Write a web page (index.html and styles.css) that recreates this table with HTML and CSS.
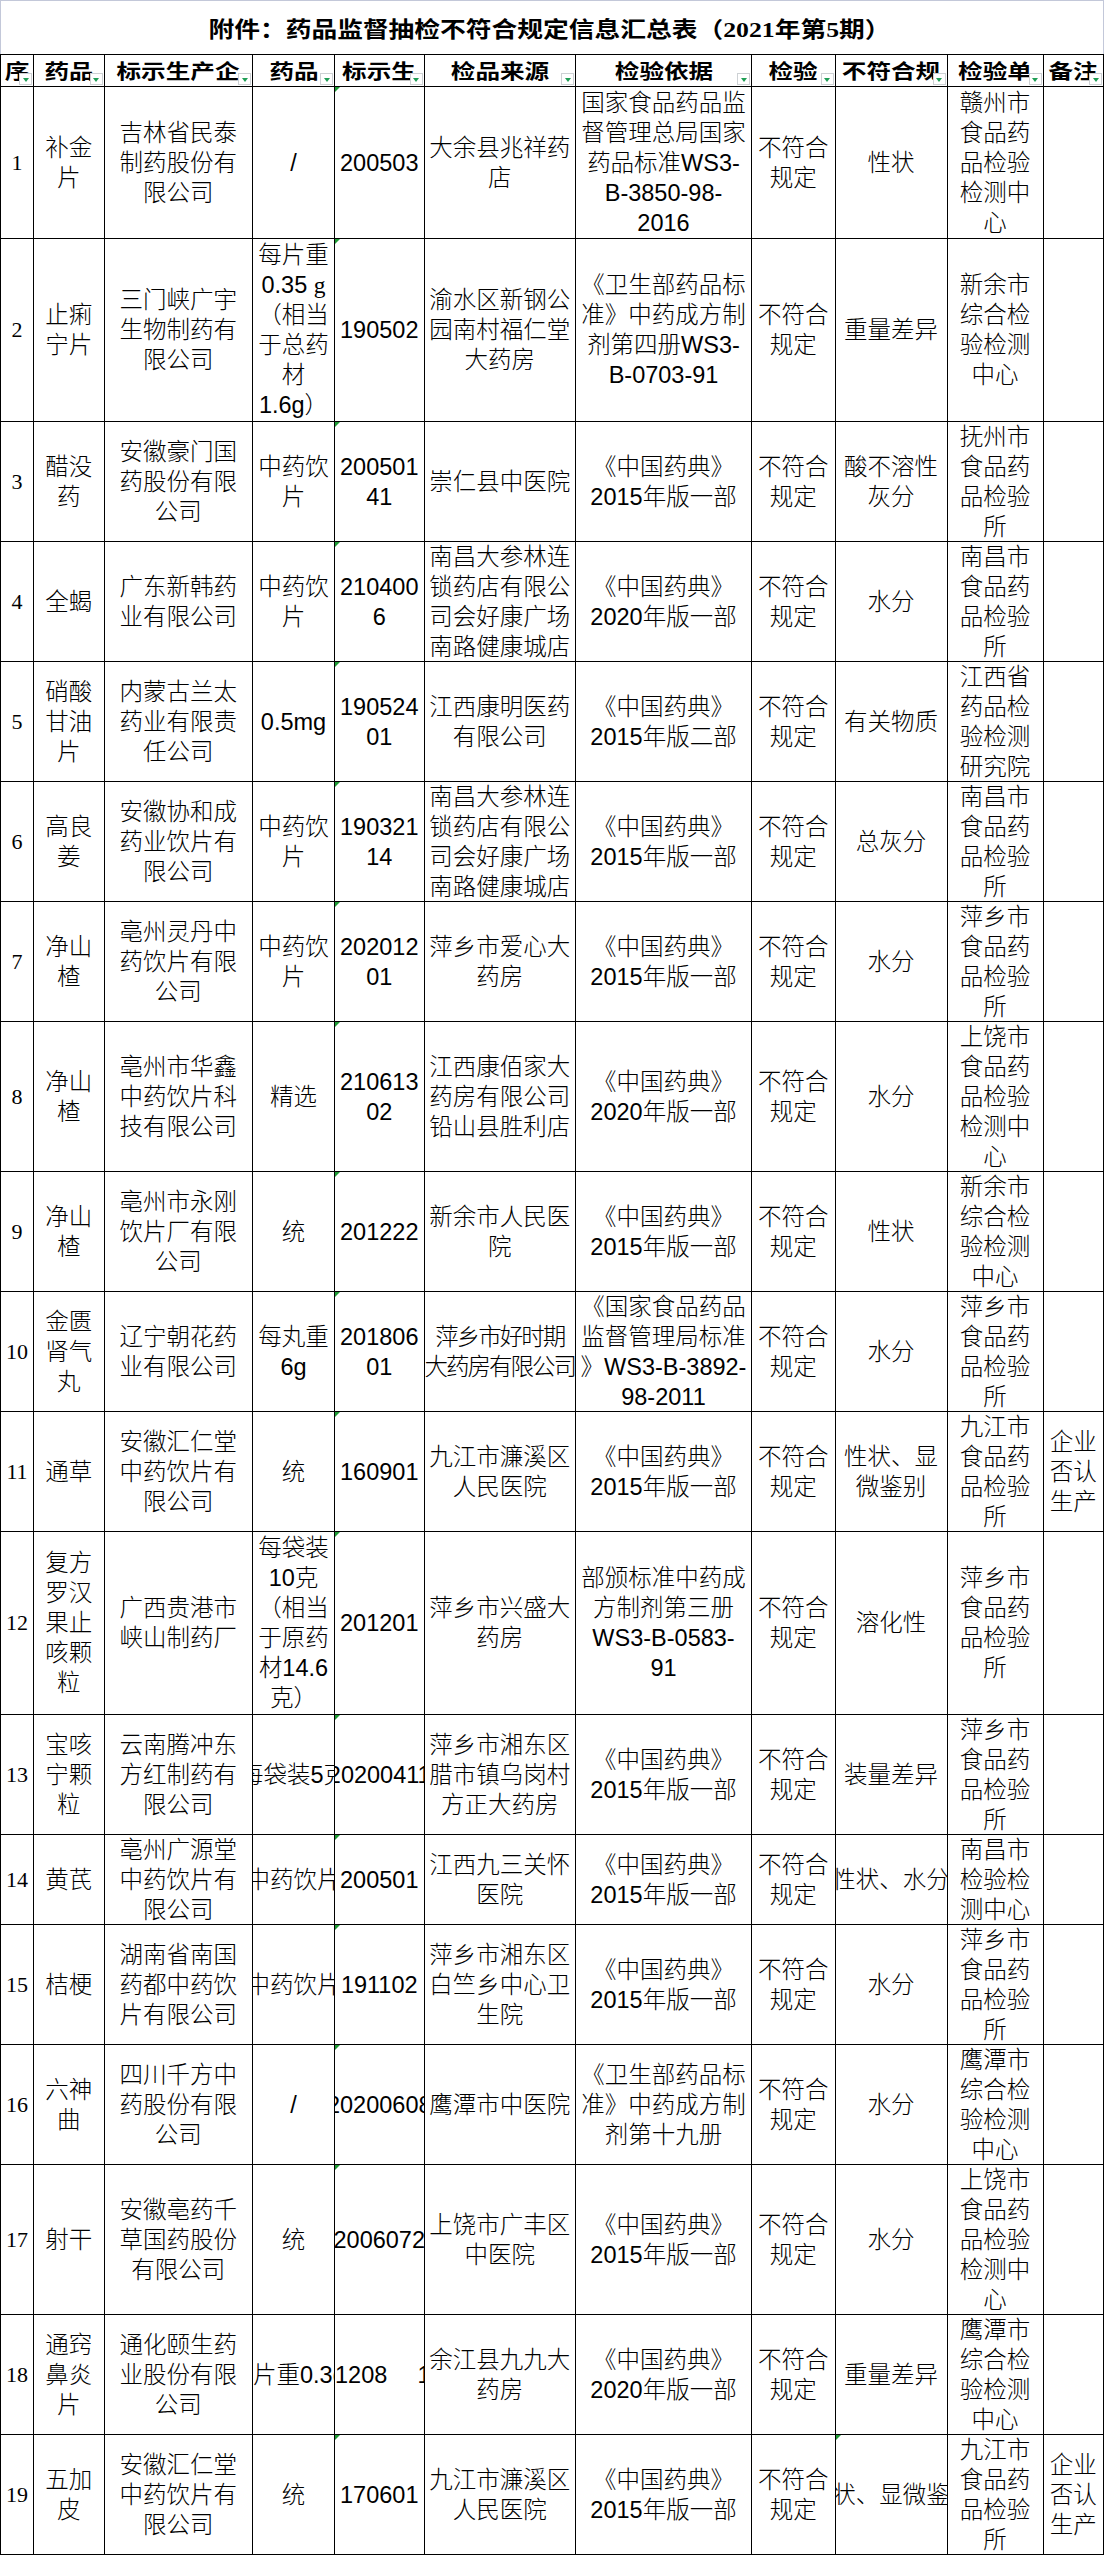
FILE: index.html
```html
<!DOCTYPE html>
<html lang="zh-CN">
<head>
<meta charset="utf-8">
<title>药品监督抽检不符合规定信息汇总表</title>
<link rel="stylesheet" href="styles.css">
</head>
<body>
<div class="sheet">
  <div class="title"><span class="title-text">附件：药品监督抽检不符合规定信息汇总表（2021年第5期）</span></div>
  <div class="grid">
    <div class="row head">
      <div class="c hc"><span class="ht">序</span><i class="fb"></i></div>
      <div class="c hc"><span class="ht">药品</span><i class="fb"></i></div>
      <div class="c hc"><span class="ht">标示生产企</span><i class="fb"></i></div>
      <div class="c hc"><span class="ht">药品</span><i class="fb"></i></div>
      <div class="c hc"><span class="ht">标示生</span><i class="fb"></i></div>
      <div class="c hc"><span class="ht">检品来源</span><i class="fb"></i></div>
      <div class="c hc"><span class="ht">检验依据</span><i class="fb"></i></div>
      <div class="c hc"><span class="ht">检验</span><i class="fb"></i></div>
      <div class="c hc"><span class="ht">不符合规</span><i class="fb"></i></div>
      <div class="c hc"><span class="ht">检验单</span><i class="fb"></i></div>
      <div class="c hc"><span class="ht">备注</span><i class="fb"></i></div>
    </div>

    <div class="row r1">
      <div class="c idx">1</div>
      <div class="c"><span class="t">补金<br>片</span></div>
      <div class="c"><span class="t">吉林省民泰<br>制药股份有<br>限公司</span></div>
      <div class="c"><span class="t">/</span></div>
      <div class="c flag"><span class="t">200503</span></div>
      <div class="c"><span class="t">大余县兆祥药<br>店</span></div>
      <div class="c"><span class="t">国家食品药品监<br>督管理总局国家<br>药品标准WS3-<br>B-3850-98-<br>2016</span></div>
      <div class="c"><span class="t">不符合<br>规定</span></div>
      <div class="c"><span class="t">性状</span></div>
      <div class="c"><span class="t">赣州市<br>食品药<br>品检验<br>检测中<br>心</span></div>
      <div class="c"></div>
    </div>

    <div class="row l6">
      <div class="c idx">2</div>
      <div class="c"><span class="t">止痢<br>宁片</span></div>
      <div class="c"><span class="t">三门峡广宇<br>生物制药有<br>限公司</span></div>
      <div class="c"><span class="t">每片重<br>0.35 <span class="sg">g</span><br>（相当<br>于总药<br>材<br>1.6g）</span></div>
      <div class="c flag"><span class="t">190502</span></div>
      <div class="c"><span class="t">渝水区新钢公<br>园南村福仁堂<br>大药房</span></div>
      <div class="c"><span class="t">《卫生部药品标<br>准》中药成方制<br>剂第四册WS3-<br>B-0703-91</span></div>
      <div class="c"><span class="t">不符合<br>规定</span></div>
      <div class="c"><span class="t">重量差异</span></div>
      <div class="c"><span class="t">新余市<br>综合检<br>验检测<br>中心</span></div>
      <div class="c"></div>
    </div>

    <div class="row l4">
      <div class="c idx">3</div>
      <div class="c"><span class="t">醋没<br>药</span></div>
      <div class="c"><span class="t">安徽豪门国<br>药股份有限<br>公司</span></div>
      <div class="c"><span class="t">中药饮<br>片</span></div>
      <div class="c flag"><span class="t">200501<br>41</span></div>
      <div class="c"><span class="t">崇仁县中医院</span></div>
      <div class="c"><span class="t">《中国药典》<br>2015年版一部</span></div>
      <div class="c"><span class="t">不符合<br>规定</span></div>
      <div class="c"><span class="t">酸不溶性<br>灰分</span></div>
      <div class="c"><span class="t">抚州市<br>食品药<br>品检验<br>所</span></div>
      <div class="c"></div>
    </div>

    <div class="row l4">
      <div class="c idx">4</div>
      <div class="c"><span class="t">全蝎</span></div>
      <div class="c"><span class="t">广东新韩药<br>业有限公司</span></div>
      <div class="c"><span class="t">中药饮<br>片</span></div>
      <div class="c flag"><span class="t">210400<br>6</span></div>
      <div class="c"><span class="t">南昌大参林连<br>锁药店有限公<br>司会好康广场<br>南路健康城店</span></div>
      <div class="c"><span class="t">《中国药典》<br>2020年版一部</span></div>
      <div class="c"><span class="t">不符合<br>规定</span></div>
      <div class="c"><span class="t">水分</span></div>
      <div class="c"><span class="t">南昌市<br>食品药<br>品检验<br>所</span></div>
      <div class="c"></div>
    </div>

    <div class="row l4">
      <div class="c idx">5</div>
      <div class="c"><span class="t">硝酸<br>甘油<br>片</span></div>
      <div class="c"><span class="t">内蒙古兰太<br>药业有限责<br>任公司</span></div>
      <div class="c"><span class="t">0.5mg</span></div>
      <div class="c flag"><span class="t">190524<br>01</span></div>
      <div class="c"><span class="t">江西康明医药<br>有限公司</span></div>
      <div class="c"><span class="t">《中国药典》<br>2015年版二部</span></div>
      <div class="c"><span class="t">不符合<br>规定</span></div>
      <div class="c"><span class="t">有关物质</span></div>
      <div class="c"><span class="t">江西省<br>药品检<br>验检测<br>研究院</span></div>
      <div class="c"></div>
    </div>

    <div class="row l4">
      <div class="c idx">6</div>
      <div class="c"><span class="t">高良<br>姜</span></div>
      <div class="c"><span class="t">安徽协和成<br>药业饮片有<br>限公司</span></div>
      <div class="c"><span class="t">中药饮<br>片</span></div>
      <div class="c flag"><span class="t">190321<br>14</span></div>
      <div class="c"><span class="t">南昌大参林连<br>锁药店有限公<br>司会好康广场<br>南路健康城店</span></div>
      <div class="c"><span class="t">《中国药典》<br>2015年版一部</span></div>
      <div class="c"><span class="t">不符合<br>规定</span></div>
      <div class="c"><span class="t">总灰分</span></div>
      <div class="c"><span class="t">南昌市<br>食品药<br>品检验<br>所</span></div>
      <div class="c"></div>
    </div>

    <div class="row l4">
      <div class="c idx">7</div>
      <div class="c"><span class="t">净山<br>楂</span></div>
      <div class="c"><span class="t">亳州灵丹中<br>药饮片有限<br>公司</span></div>
      <div class="c"><span class="t">中药饮<br>片</span></div>
      <div class="c flag"><span class="t">202012<br>01</span></div>
      <div class="c"><span class="t">萍乡市爱心大<br>药房</span></div>
      <div class="c"><span class="t">《中国药典》<br>2015年版一部</span></div>
      <div class="c"><span class="t">不符合<br>规定</span></div>
      <div class="c"><span class="t">水分</span></div>
      <div class="c"><span class="t">萍乡市<br>食品药<br>品检验<br>所</span></div>
      <div class="c"></div>
    </div>

    <div class="row l5">
      <div class="c idx">8</div>
      <div class="c"><span class="t">净山<br>楂</span></div>
      <div class="c"><span class="t">亳州市华鑫<br>中药饮片科<br>技有限公司</span></div>
      <div class="c"><span class="t">精选</span></div>
      <div class="c flag"><span class="t">210613<br>02</span></div>
      <div class="c"><span class="t">江西康佰家大<br>药房有限公司<br>铅山县胜利店</span></div>
      <div class="c"><span class="t">《中国药典》<br>2020年版一部</span></div>
      <div class="c"><span class="t">不符合<br>规定</span></div>
      <div class="c"><span class="t">水分</span></div>
      <div class="c"><span class="t">上饶市<br>食品药<br>品检验<br>检测中<br>心</span></div>
      <div class="c"></div>
    </div>

    <div class="row l4">
      <div class="c idx">9</div>
      <div class="c"><span class="t">净山<br>楂</span></div>
      <div class="c"><span class="t">亳州市永刚<br>饮片厂有限<br>公司</span></div>
      <div class="c"><span class="t">统</span></div>
      <div class="c flag"><span class="t">201222</span></div>
      <div class="c"><span class="t">新余市人民医<br>院</span></div>
      <div class="c"><span class="t">《中国药典》<br>2015年版一部</span></div>
      <div class="c"><span class="t">不符合<br>规定</span></div>
      <div class="c"><span class="t">性状</span></div>
      <div class="c"><span class="t">新余市<br>综合检<br>验检测<br>中心</span></div>
      <div class="c"></div>
    </div>

    <div class="row l4">
      <div class="c idx">10</div>
      <div class="c"><span class="t">金匮<br>肾气<br>丸</span></div>
      <div class="c"><span class="t">辽宁朝花药<br>业有限公司</span></div>
      <div class="c"><span class="t">每丸重<br>6g</span></div>
      <div class="c flag"><span class="t">201806<br>01</span></div>
      <div class="c"><span class="t tight">萍乡市好时期<br>大药房有限公司</span></div>
      <div class="c"><span class="t">《国家食品药品<br>监督管理局标准<br>》WS3-B-3892-<br>98-2011</span></div>
      <div class="c"><span class="t">不符合<br>规定</span></div>
      <div class="c"><span class="t">水分</span></div>
      <div class="c"><span class="t">萍乡市<br>食品药<br>品检验<br>所</span></div>
      <div class="c"></div>
    </div>

    <div class="row l4">
      <div class="c idx">11</div>
      <div class="c"><span class="t">通草</span></div>
      <div class="c"><span class="t">安徽汇仁堂<br>中药饮片有<br>限公司</span></div>
      <div class="c"><span class="t">统</span></div>
      <div class="c flag"><span class="t">160901</span></div>
      <div class="c"><span class="t">九江市濂溪区<br>人民医院</span></div>
      <div class="c"><span class="t">《中国药典》<br>2015年版一部</span></div>
      <div class="c"><span class="t">不符合<br>规定</span></div>
      <div class="c"><span class="t">性状、显<br>微鉴别</span></div>
      <div class="c"><span class="t">九江市<br>食品药<br>品检验<br>所</span></div>
      <div class="c"><span class="t">企业<br>否认<br>生产</span></div>
    </div>

    <div class="row l6">
      <div class="c idx">12</div>
      <div class="c"><span class="t">复方<br>罗汉<br>果止<br>咳颗<br>粒</span></div>
      <div class="c"><span class="t">广西贵港市<br>峡山制药厂</span></div>
      <div class="c"><span class="t">每袋装<br>10克<br>（相当<br>于原药<br>材14.6<br>克）</span></div>
      <div class="c flag"><span class="t">201201</span></div>
      <div class="c"><span class="t">萍乡市兴盛大<br>药房</span></div>
      <div class="c"><span class="t">部颁标准中药成<br>方制剂第三册<br>WS3-B-0583-<br>91</span></div>
      <div class="c"><span class="t">不符合<br>规定</span></div>
      <div class="c"><span class="t">溶化性</span></div>
      <div class="c"><span class="t">萍乡市<br>食品药<br>品检验<br>所</span></div>
      <div class="c"></div>
    </div>

    <div class="row l4">
      <div class="c idx">13</div>
      <div class="c"><span class="t">宝咳<br>宁颗<br>粒</span></div>
      <div class="c"><span class="t">云南腾冲东<br>方红制药有<br>限公司</span></div>
      <div class="c"><span class="t">每袋装5克</span></div>
      <div class="c flag"><span class="t">20200411</span></div>
      <div class="c"><span class="t">萍乡市湘东区<br>腊市镇乌岗村<br>方正大药房</span></div>
      <div class="c"><span class="t">《中国药典》<br>2015年版一部</span></div>
      <div class="c"><span class="t">不符合<br>规定</span></div>
      <div class="c"><span class="t">装量差异</span></div>
      <div class="c"><span class="t">萍乡市<br>食品药<br>品检验<br>所</span></div>
      <div class="c"></div>
    </div>

    <div class="row l3">
      <div class="c idx">14</div>
      <div class="c"><span class="t">黄芪</span></div>
      <div class="c"><span class="t">亳州广源堂<br>中药饮片有<br>限公司</span></div>
      <div class="c"><span class="t">中药饮片</span></div>
      <div class="c flag"><span class="t">200501</span></div>
      <div class="c"><span class="t">江西九三关怀<br>医院</span></div>
      <div class="c"><span class="t">《中国药典》<br>2015年版一部</span></div>
      <div class="c"><span class="t">不符合<br>规定</span></div>
      <div class="c"><span class="t">性状、水分</span></div>
      <div class="c"><span class="t">南昌市<br>检验检<br>测中心</span></div>
      <div class="c"></div>
    </div>

    <div class="row l4">
      <div class="c idx">15</div>
      <div class="c"><span class="t">桔梗</span></div>
      <div class="c"><span class="t">湖南省南国<br>药都中药饮<br>片有限公司</span></div>
      <div class="c"><span class="t">中药饮片</span></div>
      <div class="c flag"><span class="t">191102</span></div>
      <div class="c"><span class="t">萍乡市湘东区<br>白竺乡中心卫<br>生院</span></div>
      <div class="c"><span class="t">《中国药典》<br>2015年版一部</span></div>
      <div class="c"><span class="t">不符合<br>规定</span></div>
      <div class="c"><span class="t">水分</span></div>
      <div class="c"><span class="t">萍乡市<br>食品药<br>品检验<br>所</span></div>
      <div class="c"></div>
    </div>

    <div class="row l4">
      <div class="c idx">16</div>
      <div class="c"><span class="t">六神<br>曲</span></div>
      <div class="c"><span class="t">四川千方中<br>药股份有限<br>公司</span></div>
      <div class="c"><span class="t">/</span></div>
      <div class="c flag"><span class="t">20200608</span></div>
      <div class="c"><span class="t">鹰潭市中医院</span></div>
      <div class="c"><span class="t">《卫生部药品标<br>准》中药成方制<br>剂第十九册</span></div>
      <div class="c"><span class="t">不符合<br>规定</span></div>
      <div class="c"><span class="t">水分</span></div>
      <div class="c"><span class="t">鹰潭市<br>综合检<br>验检测<br>中心</span></div>
      <div class="c"></div>
    </div>

    <div class="row l5">
      <div class="c idx">17</div>
      <div class="c"><span class="t">射干</span></div>
      <div class="c"><span class="t">安徽亳药千<br>草国药股份<br>有限公司</span></div>
      <div class="c"><span class="t">统</span></div>
      <div class="c flag"><span class="t">2006072</span></div>
      <div class="c"><span class="t">上饶市广丰区<br>中医院</span></div>
      <div class="c"><span class="t">《中国药典》<br>2015年版一部</span></div>
      <div class="c"><span class="t">不符合<br>规定</span></div>
      <div class="c"><span class="t">水分</span></div>
      <div class="c"><span class="t">上饶市<br>食品药<br>品检验<br>检测中<br>心</span></div>
      <div class="c"></div>
    </div>

    <div class="row l4">
      <div class="c idx">18</div>
      <div class="c"><span class="t">通窍<br>鼻炎<br>片</span></div>
      <div class="c"><span class="t">通化颐生药<br>业股份有限<br>公司</span></div>
      <div class="c start"><span class="t">片重0.3g</span></div>
      <div class="c split"><span class="t">1208</span><span class="t tail">1</span></div>
      <div class="c"><span class="t">余江县九九大<br>药房</span></div>
      <div class="c"><span class="t">《中国药典》<br>2020年版一部</span></div>
      <div class="c"><span class="t">不符合<br>规定</span></div>
      <div class="c"><span class="t">重量差异</span></div>
      <div class="c"><span class="t">鹰潭市<br>综合检<br>验检测<br>中心</span></div>
      <div class="c"></div>
    </div>

    <div class="row l4">
      <div class="c idx">19</div>
      <div class="c"><span class="t">五加<br>皮</span></div>
      <div class="c"><span class="t">安徽汇仁堂<br>中药饮片有<br>限公司</span></div>
      <div class="c"><span class="t">统</span></div>
      <div class="c flag"><span class="t">170601</span></div>
      <div class="c"><span class="t">九江市濂溪区<br>人民医院</span></div>
      <div class="c"><span class="t">《中国药典》<br>2015年版一部</span></div>
      <div class="c"><span class="t">不符合<br>规定</span></div>
      <div class="c flag"><span class="t">性状、显微鉴别</span></div>
      <div class="c"><span class="t">九江市<br>食品药<br>品检验<br>所</span></div>
      <div class="c"><span class="t">企业<br>否认<br>生产</span></div>
    </div>
  </div>
</div>
</body>
</html>
```

FILE: styles.css
```css
html, body {
  margin: 0;
  padding: 0;
  background: #ffffff;
}

body {
  font-family: "Liberation Sans", "Noto Sans CJK SC", sans-serif;
  color: #000;
}

.sheet {
  width: 1104px;
}

.title {
  height: 54px;
  box-sizing: border-box;
  border: 1px solid #c3c8d9;
  border-bottom: none;
  display: flex;
  align-items: center;
  justify-content: center;
  padding-top: 5px;
  overflow: hidden;
}

.title-text {
  display: inline-block;
  white-space: nowrap;
  font-family: "Liberation Serif", "Noto Sans CJK SC", serif;
  font-weight: 700;
  font-size: 22px;
  line-height: 30px;
  transform: scaleX(1.17);
  margin-left: -4px;
}

.grid {
  border-top: 1px solid #000;
  border-left: 1px solid #000;
}

.row {
  display: grid;
  grid-template-columns: 33px 70.5px 148.5px 82px 89.5px 151.5px 176px 83.5px 112px 96px 60.5px;
  box-sizing: border-box;
  border-bottom: 1px solid #000;
}

.head { height: 32px; }
.r1 { height: 152px; }
.l3 { height: 90px; }
.l4 { height: 120px; }
.l5 { height: 150px; }
.l6 { height: 183px; }

.c {
  position: relative;
  box-sizing: border-box;
  border-right: 1px solid #000;
  display: flex;
  align-items: center;
  justify-content: center;
  overflow: hidden;
  min-width: 0;
  text-align: center;
  white-space: nowrap;
  font-size: 23.5px;
  line-height: 30px;
  font-weight: 300;
}

.t {
  display: block;
  flex: none;
}

.tight {
  letter-spacing: -2px;
}

.idx {
  font-family: "Liberation Serif", serif;
  font-size: 22px;
  font-weight: 400;
}

.sg {
  font-family: "Liberation Serif", serif;
}

.start {
  justify-content: flex-start;
}

.split {
  justify-content: space-between;
}

.tail {
  margin-right: -7px;
}

/* header */
.hc {
  align-items: flex-start;
}

.ht {
  display: block;
  flex: none;
  font-weight: 700;
  font-size: 20px;
  line-height: 32px;
  padding-top: 1px;
  transform: scaleX(1.23);
}

.fb {
  position: absolute;
  right: 1px;
  bottom: 1px;
  width: 13px;
  height: 12px;
  box-sizing: border-box;
  border: 1px solid #cdd1d4;
  background: #fff;
}

.fb::after {
  content: "";
  position: absolute;
  left: 2.5px;
  top: 4px;
  border-left: 3.5px solid transparent;
  border-right: 3.5px solid transparent;
  border-top: 4px solid #1f9e55;
}

/* excel "number stored as text" marker */
.flag::before {
  content: "";
  position: absolute;
  top: 0;
  left: 0;
  border-top: 5px solid #1e9b35;
  border-right: 5px solid transparent;
}
```
